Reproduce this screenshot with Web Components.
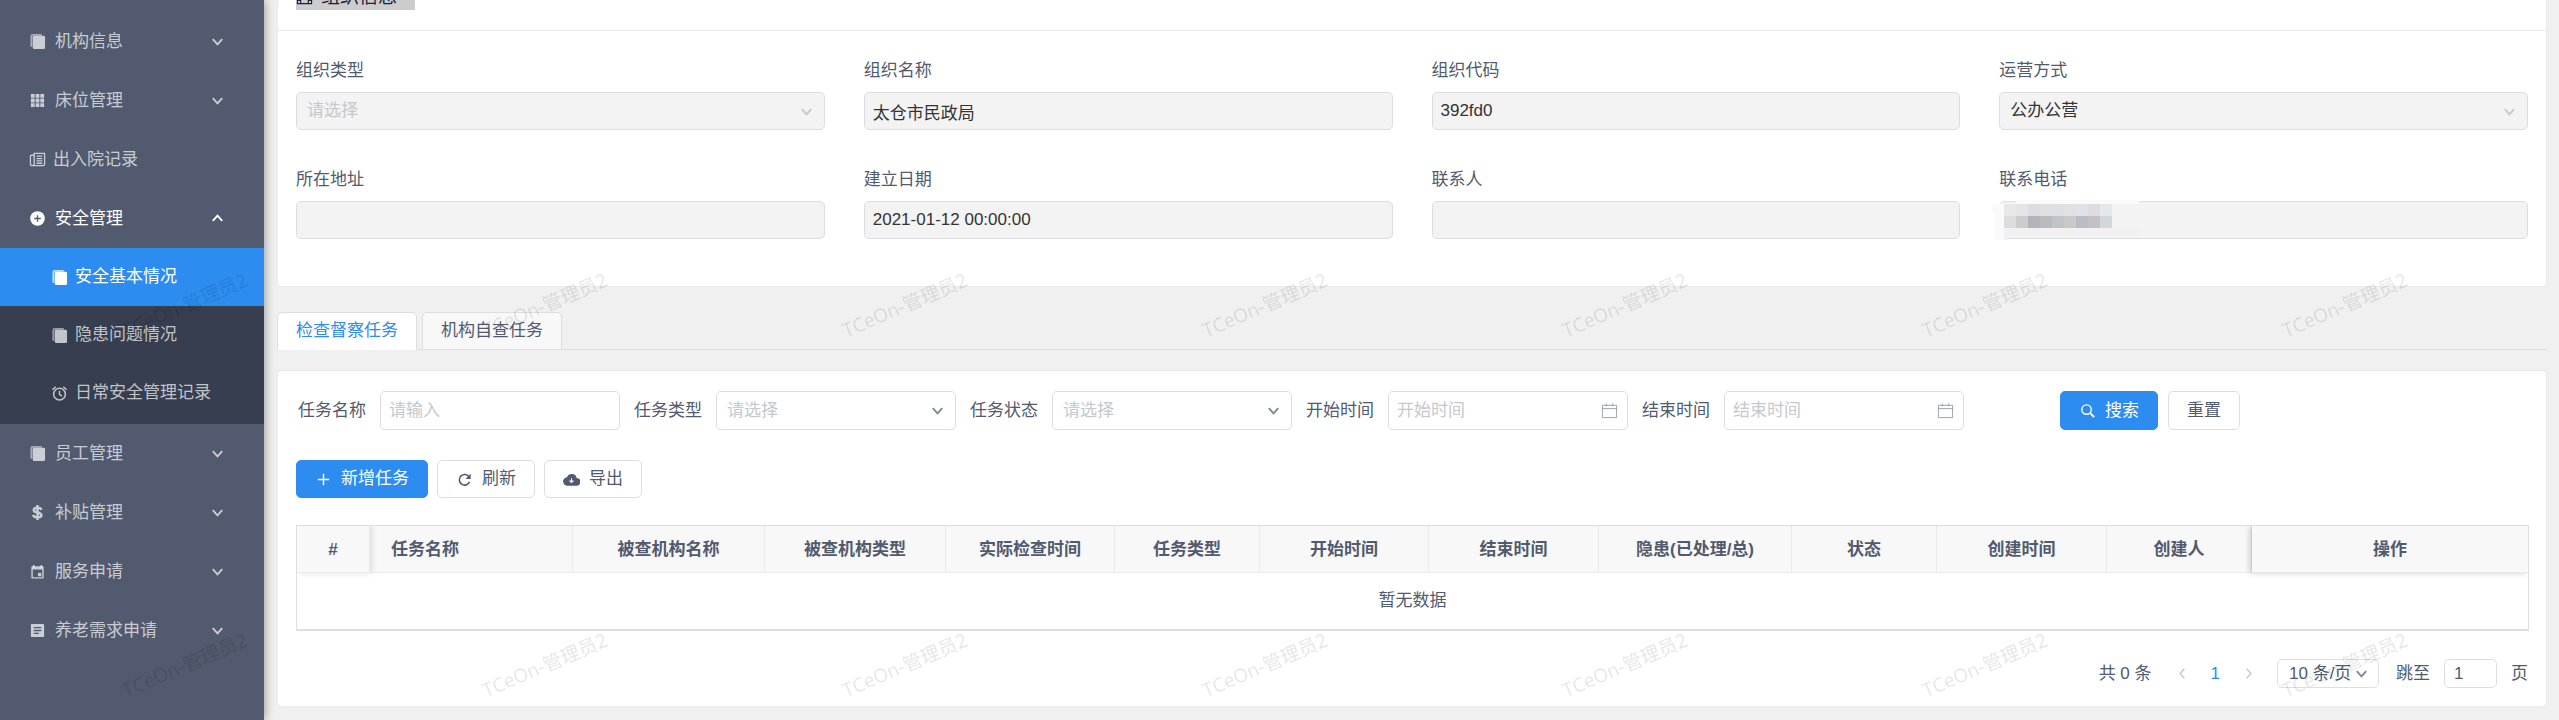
<!DOCTYPE html>
<html lang="zh-CN">
<head>
<meta charset="utf-8">
<title>安全基本情况</title>
<style>
  html {
    height: 100%;
    overflow: hidden;
  }
  body {
    margin: 0;
    min-height: 100%;
    display: flex;
    background: #f0f0f0;
    color: #515a6e;
    font: 17px/20px "Liberation Sans", "Noto Sans CJK SC", sans-serif;
  }
  main {
    flex: 1;
    min-width: 0;
    padding: 0 12px 13px 13px;
  }
  .info {
    display: grid;
    grid-template-columns: repeat(4, 1fr);
    gap: 40px 39px;
    padding: 30px 0 29px;
  }
  .filters {
    display: flex;
    gap: 14px;
    padding-left: 2px;
  }
  .buttons {
    display: flex;
    gap: 10px;
  }
  .filters .buttons {
    margin-left: 82px;
  }
  .actions {
    gap: 9px;
    margin: 30px 0 27px;
  }
</style>
</head>
<body>

<side-nav>
  <nav-group icon="copy" label="机构信息"></nav-group>
  <nav-group icon="apps" label="床位管理"></nav-group>
  <nav-item icon="paper" label="出入院记录"></nav-item>
  <nav-group icon="add" label="安全管理" open>
    <nav-item icon="copy" label="安全基本情况" active></nav-item>
    <nav-item icon="copy" label="隐患问题情况"></nav-item>
    <nav-item icon="alarm" label="日常安全管理记录"></nav-item>
  </nav-group>
  <nav-group icon="copy" label="员工管理"></nav-group>
  <nav-group icon="dollar" label="补贴管理"></nav-group>
  <nav-group icon="calendar" label="服务申请"></nav-group>
  <nav-group icon="list" label="养老需求申请"></nav-group>
</side-nav>

<main>
  <page-card flush>
    <card-title slot="title">组织信息</card-title>
    <div class="info">
      <form-field label="组织类型" type="select" placeholder="请选择" disabled></form-field>
      <form-field label="组织名称" value="太仓市民政局" disabled></form-field>
      <form-field label="组织代码" value="392fd0" disabled></form-field>
      <form-field label="运营方式" type="select" value="公办公营" disabled></form-field>
      <form-field label="所在地址" disabled></form-field>
      <form-field label="建立日期" value="2021-01-12 00:00:00" disabled></form-field>
      <form-field label="联系人" disabled></form-field>
      <form-field label="联系电话" disabled><pixel-mask></pixel-mask></form-field>
    </div>
  </page-card>

  <tab-bar></tab-bar>

  <page-card>
    <div class="filters">
      <form-field inline label="任务名称" placeholder="请输入"></form-field>
      <form-field inline label="任务类型" type="select" placeholder="请选择"></form-field>
      <form-field inline label="任务状态" type="select" placeholder="请选择"></form-field>
      <form-field inline label="开始时间" type="date" placeholder="开始时间"></form-field>
      <form-field inline label="结束时间" type="date" placeholder="结束时间"></form-field>
      <div class="buttons">
        <app-button primary icon="search">搜索</app-button>
        <app-button>重置</app-button>
      </div>
    </div>
    <div class="buttons actions">
      <app-button primary icon="plus">新增任务</app-button>
      <app-button icon="refresh">刷新</app-button>
      <app-button icon="cloud">导出</app-button>
    </div>
    <task-table></task-table>
    <page-pager></page-pager>
  </page-card>
</main>

<water-mark text="TCeOn-管理员2"></water-mark>

<script>
const icons = {
  copy: `<path d="M2.500 14.500V3.500Q2.500 2 4 2H13.500" fill="none" stroke="currentColor" stroke-width="2" opacity=".7"/><rect x="4" y="3" width="13" height="14" rx="1.500" fill="currentColor"/>`,
  apps: `<path d="M2 2h4v4H2zM7 2h4v4H7zM12 2h4v4H12zM2 7h4v4H2zM7 7h4v4H7zM12 7h4v4H12zM2 12h4v4H2zM7 12h4v4H7zM12 12h4v4H12z" fill="currentColor"/>`,
  paper: `<path d="M5 4.500H2.500Q1.500 4.500 1.500 5.500V13.500Q1.500 15.500 3.500 15.500H15Q16.500 15.500 16.500 14V2.500H5.500V13.500Q5.500 15.500 3.500 15.500M8 5.500h6M8 8h6M8 10.500h6M8 13h6" fill="none" stroke="currentColor" stroke-width="1.400"/>`,
  add: `<circle cx="9" cy="9" r="7.700" fill="currentColor"/><path d="M9 5.500v7M5.500 9h7" stroke="#515a6e" stroke-width="1.400"/>`,
  alarm: `<circle cx="9" cy="9.700" r="6.200" fill="none" stroke="currentColor" stroke-width="1.600"/><path d="M9 6v4l2.600 1.800M1.500 5 5 2M16.500 5 13 2" fill="none" stroke="currentColor" stroke-width="1.500"/>`,
  dollar: `<path d="M13.200 6.200Q12.500 4 9 4T5 6.300Q5 8.300 9 9t4.200 3Q13.200 14.200 9 14.200T4.500 11.600M9 1v16" fill="none" stroke="currentColor" stroke-width="2.600"/>`,
  calendar: `<path d="M5 2v3M13 2v3" stroke="currentColor" stroke-width="1.600"/><path fill-rule="evenodd" d="M3.500 3.500h11q1 0 1 1v11q0 1-1 1h-11q-1 0-1-1v-11q0-1 1-1zM4 7v8h10V7z" fill="currentColor"/><path d="M9.500 10.500h3.500V14H9.500z" fill="currentColor"/>`,
  list: `<path fill-rule="evenodd" d="M3 2h12q1 0 1 1v12q0 1-1 1H3q-1 0-1-1V3q0-1 1-1zM5 5.300v1.400h8V5.300zM5 8.300v1.400h8V8.300zM5 11.300v1.400h5.500v-1.400z" fill="currentColor"/>`,
  down: `<path d="M4 6.500 9 12l5-5.500" fill="none" stroke="currentColor" stroke-width="2"/>`,
  up: `<path d="M4 11.500 9 6l5 5.500" fill="none" stroke="currentColor" stroke-width="2"/>`,
  left: `<path d="M11 4 6.500 9l4.500 5" fill="none" stroke="currentColor" stroke-width="1.500"/>`,
  right: `<path d="M7 4l4.500 5L7 14" fill="none" stroke="currentColor" stroke-width="1.500"/>`,
  date: `<path d="M1.500 3.500h15v13h-15zM1.500 7h15M5.500 1.500v3M12.500 1.500v3" fill="none" stroke="currentColor" opacity=".8"/>`,
  search: `<circle cx="8" cy="8" r="5" fill="none" stroke="currentColor" stroke-width="1.500"/><path d="M11.600 11.600 16 16" stroke="currentColor" stroke-width="2"/>`,
  plus: `<path d="M9 3v12M3 9h12" stroke="currentColor" stroke-width="1.500"/>`,
  refresh: `<path d="M14 6.500A5.600 5.600 0 1 0 14.300 11.500" fill="none" stroke="currentColor" stroke-width="1.700"/><path d="M15.500 3v5.500H10z" fill="currentColor"/>`,
  cloud: `<path d="M14.500 7.300A5.500 5.500 0 0 0 4.200 6.500 4.500 4.500 0 0 0 5 15.500h9A4.100 4.100 0 0 0 14.500 7.300z" fill="currentColor"/><path d="M9 7.500v4M7 10.500h4L9 12.500z" fill="#fff" stroke="#fff"/>`,
  film: `<path d="M1.500 2.500h15v13h-15zM5 2.500v13M13 2.500v13M5 9h8M1.500 6H5M1.500 9H5M1.500 12H5M13 6h3.500M13 9h3.500M13 12h3.500" fill="none" stroke="currentColor" stroke-width="1.200"/>`
};

function icon(name) {
  return `<svg class="icon" viewBox="0 0 18 18" aria-hidden="true">${icons[name]}</svg>`;
}

// shared base: every element renders its own markup into an open root
class BaseElement extends HTMLElement {
  constructor() {
    super();
    this.attachShadow({ mode: "open" });
  }
  connectedCallback() {
    const template = document.createElement("template");
    template.innerHTML = `
      <style>
        *, :host { box-sizing: border-box; }
        .icon { width: 17px; height: 17px; flex: none; display: block; }
      </style>
      ${this.render()}`;
    this.shadowRoot.replaceChildren(template.content.cloneNode(true));
  }
  attr(name) {
    return this.getAttribute(name) || "";
  }
}

class SideNav extends BaseElement {
  render() {
    return `
      <style>
        :host {
          display: block;
          flex: none;
          width: 264px;
          padding-top: 12px;
          background: #515a6e;
          box-shadow: 2px 0 8px rgba(29, 35, 41, .35);
          z-index: 1;
        }
      </style>
      <nav><slot></slot></nav>`;
  }
}

class NavGroup extends BaseElement {
  render() {
    const open = this.hasAttribute("open");
    return `
      <style>
        :host { display: block; color: rgba(255, 255, 255, .7); }
        :host([open]) { color: #fff; }
        button {
          display: flex;
          align-items: center;
          gap: 9px;
          width: 100%;
          height: 59px;
          padding: 0 38px 0 29px;
          border: 0;
          background: none;
          color: inherit;
          font: inherit;
          text-align: left;
        }
        span { flex: 1; }
        .sub { background: #363e4f; }
        :host([open]) .sub { padding-bottom: 2px; }
        ::slotted(nav-item) { --item-height: 58px; --item-indent: 51px; }
      </style>
      <button type="button" aria-expanded="${open}">
        ${icon(this.attr("icon"))}<span>${this.attr("label")}</span>${icon(open ? "up" : "down")}
      </button>
      <div class="sub"><slot></slot></div>`;
  }
}

class NavItem extends BaseElement {
  render() {
    return `
      <style>
        :host { display: block; }
        a {
          display: flex;
          align-items: center;
          gap: 7px;
          height: var(--item-height, 59px);
          padding-left: var(--item-indent, 29px);
          color: rgba(255, 255, 255, .7);
          text-decoration: none;
        }
        :host([active]) a { background: #2d8cf0; color: #fff; }
      </style>
      <a href="#">${icon(this.attr("icon"))}<span>${this.attr("label")}</span></a>`;
  }
}

class PageCard extends BaseElement {
  render() {
    return `
      <style>
        :host {
          display: block;
          padding: 20px 18px 18px;
          border: 1px solid #e8eaec;
          border-radius: 5px;
          background: #fff;
        }
        /* first card runs out of the top of the scrolled view */
        :host([flush]) {
          padding: 0 18px 18px;
          border-top: 0;
          border-radius: 0 0 5px 5px;
        }
        header { display: none; }
        :host([flush]) header {
          display: flex;
          align-items: flex-end;
          height: 31px;
          margin: 0 -18px;
          padding: 0 18px 20px;
          border-bottom: 1px solid #e8eaec;
          overflow: hidden;
        }
      </style>
      <header><slot name="title"></slot></header>
      <slot></slot>`;
  }
}

class CardTitle extends BaseElement {
  render() {
    return `
      <style>
        :host {
          display: flex;
          align-items: center;
          gap: 8px;
          padding-right: 18px;
          background: #ccc;
          color: #17233d;
          font-size: 19px;
          line-height: 26px;
        }
      </style>
      ${icon("film")}<slot></slot>`;
  }
}

class FormField extends BaseElement {
  render() {
    const type = this.getAttribute("type");
    const disabled = this.hasAttribute("disabled") ? "disabled" : "";
    const value = this.attr("value");
    const hint = this.attr("placeholder");
    const control = type === "select"
      ? `<select id="control" class="${value ? "" : "empty"}" ${disabled}><option>${value || hint}</option></select>${icon("down")}`
      : `<input id="control" type="text" value="${value}" placeholder="${hint}" ${disabled}>${type === "date" ? icon("date") : ""}`;
    return `
      <style>
        :host { display: grid; gap: 11px; min-width: 0; }
        :host([inline]) {
          display: flex;
          align-items: center;
          gap: 14px;
        }
        label { white-space: nowrap; }
        .box { display: grid; align-items: center; position: relative; }
        :host([inline]) .box { width: 240px; }
        input, select, .icon { grid-area: 1 / 1; }
        input, select {
          appearance: none;
          width: 100%;
          height: 38px;
          margin: 0;
          padding: 0 8px;
          border: 1px solid #dcdee2;
          border-radius: 5px;
          background: #fff;
          color: #515a6e;
          font: inherit;
          opacity: 1;
        }
        input { line-height: 26px; }
        :host([inline]) input, :host([inline]) select { height: 39px; }
        select { padding: 0 10px; }
        select.empty, ::placeholder { color: #c5c8ce; opacity: 1; }
        :disabled { background: #f3f3f3; color: #333; }
        .box .icon {
          justify-self: end;
          margin-right: 10px;
          color: #808695;
          pointer-events: none;
        }
        :disabled ~ .icon { color: #c5c8ce; }
      </style>
      <label for="control">${this.attr("label")}</label>
      <div class="box">${control}<slot></slot></div>`;
  }
}

// blocks covering the phone number
class PixelMask extends BaseElement {
  render() {
    const rows = [
      ["#e8e8e9", "#e5e5e5", "#dcdde0", "#e0e0e1", "#dddfe3", "#e0e1e1", "#dfe2e6", "#dddde0", "#e6e7ea"],
      ["#dcdcde", "#cccccd", "#b3b4bb", "#bdbabd", "#c1c3cb", "#c9c8cb", "#bbbdc6", "#c3c1c5", "#d3d7dd"]
    ];
    const cells = rows.map((row, y) => row.map((fill, x) =>
      `<rect x="${12 + x * 12}" y="${4 + y * 12}" width="12" height="12" fill="${fill}"/>`).join("")).join("");
    return `
      <style>
        :host { position: absolute; left: -7px; top: -1px; }
        svg { display: block; }
      </style>
      <svg width="148" height="40" aria-hidden="true">
        <path d="M3 4H24V0H147V4H12V40H3V15Q0 13 0 9T3 4z" fill="#fafafa"/>
        <path d="M12 28H147V36H16V40H12z" fill="#f1f1f2"/>
        ${cells}
      </svg>`;
  }
}

class TabBar extends BaseElement {
  render() {
    return `
      <style>
        :host {
          display: flex;
          gap: 5px;
          height: 38px;
          margin: 25px 0 20px;
          box-shadow: inset 0 -1px #dcdee2;
        }
        button {
          padding: 0 18px;
          border: 1px solid #dcdee2;
          border-radius: 5px 5px 0 0;
          background: #f8f8f9;
          color: inherit;
          font: inherit;
        }
        button[aria-selected="true"] {
          border-bottom-color: #fff;
          background: #fff;
          color: #2d8cf0;
        }
      </style>
      <button type="button" role="tab" aria-selected="true">检查督察任务</button>
      <button type="button" role="tab" aria-selected="false">机构自查任务</button>`;
  }
}

class AppButton extends BaseElement {
  render() {
    return `
      <style>
        :host { display: block; }
        button {
          display: flex;
          align-items: center;
          gap: 9px;
          height: 100%;
          min-height: 38px;
          padding: 0 18px;
          border: 1px solid #dcdee2;
          border-radius: 5px;
          background: #fff;
          color: #515a6e;
          font: inherit;
          white-space: nowrap;
        }
        :host([primary]) button {
          border-color: #2d8cf0;
          background: #2d8cf0;
          color: #fff;
        }
      </style>
      <button type="button">${this.attr("icon") ? icon(this.attr("icon")) : ""}<slot></slot></button>`;
  }
}

class TaskTable extends BaseElement {
  render() {
    const columns = [
      ["#", 73], ["任务名称", 203], ["被查机构名称", 192], ["被查机构类型", 181],
      ["实际检查时间", 169], ["任务类型", 145], ["开始时间", 169], ["结束时间", 170],
      ["隐患(已处理/总)", 193], ["状态", 145], ["创建时间", 170], ["创建人", 145], ["操作", 276]
    ];
    return `
      <style>
        :host { display: block; }
        table {
          width: 100%;
          table-layout: fixed;
          border: 1px solid #dcdee2;
          border-bottom-width: 2px;
          border-spacing: 0;
        }
        th {
          height: 47px;
          padding: 2px 0 0;
          border-right: 1px solid #e8eaec;
          border-bottom: 1px solid #e8eaec;
          background: #f8f8f9;
        }
        th:nth-child(2) { padding-left: 21px; text-align: left; }
        th:first-child { position: relative; box-shadow: 2px 0 6px rgba(0, 0, 0, .12); clip-path: inset(0 -10px -10px 0); }
        th:last-child { position: relative; border-right: 0; box-shadow: -2px 0 6px rgba(0, 0, 0, .2); clip-path: inset(0 0 -10px -10px); }
        td { height: 56px; padding: 0; text-align: center; }
      </style>
      <table>
        <colgroup>${columns.map(c => `<col style="width: ${c[1]}px">`).join("")}</colgroup>
        <thead><tr>${columns.map(c => `<th scope="col">${c[0]}</th>`).join("")}</tr></thead>
        <tbody><tr><td colspan="${columns.length}">暂无数据</td></tr></tbody>
      </table>`;
  }
}

class PagePager extends BaseElement {
  render() {
    return `
      <style>
        :host {
          display: flex;
          align-items: center;
          justify-content: flex-end;
          height: 29px;
          margin-top: 28px;
        }
        .total { margin-right: 22px; }
        .pages { display: flex; align-items: center; gap: 20px; margin-right: 20px; }
        .pages button { padding: 0; border: 0; background: none; color: #c5c8ce; }
        a { color: #2d8cf0; text-decoration: none; }
        .size { display: grid; align-items: center; margin-right: 17px; }
        select, input {
          appearance: none;
          height: 29px;
          margin: 0;
          padding: 0 11px;
          border: 1px solid #dcdee2;
          border-radius: 5px;
          background: #fff;
          color: inherit;
          font: inherit;
        }
        select { width: 102px; }
        select, .size .icon { grid-area: 1 / 1; }
        .size .icon { justify-self: end; margin-right: 9px; color: #808695; pointer-events: none; }
        label { display: flex; align-items: center; gap: 14px; }
        input { width: 53px; padding: 0 9px; }
      </style>
      <span class="total">共 0 条</span>
      <div class="pages">
        <button type="button" aria-label="上一页" disabled>${icon("left")}</button>
        <a href="#">1</a>
        <button type="button" aria-label="下一页" disabled>${icon("right")}</button>
      </div>
      <div class="size"><select aria-label="每页条数"><option>10 条/页</option></select>${icon("down")}</div>
      <label>跳至<input type="text" value="1">页</label>`;
  }
}

class WaterMark extends BaseElement {
  render() {
    return `
      <style>
        :host {
          position: fixed;
          inset: 0;
          z-index: 2;
          display: grid;
          grid-template-columns: repeat(7, 360px);
          grid-auto-rows: 360px;
          overflow: hidden;
          pointer-events: none;
          color: rgba(0, 0, 0, .1);
          font: 19px/20px "Open Sans", "Noto Sans CJK SC", sans-serif;
        }
        span {
          place-self: end center;
          padding: 0 0 45px 10px;
        }
        b { display: block; font-weight: normal; transform: rotate(-23deg); }
      </style>
      ${`<span aria-hidden="true"><b>${this.attr("text")}</b></span>`.repeat(14)}`;
  }
}

customElements.define("side-nav", SideNav);
customElements.define("nav-group", NavGroup);
customElements.define("nav-item", NavItem);
customElements.define("page-card", PageCard);
customElements.define("card-title", CardTitle);
customElements.define("form-field", FormField);
customElements.define("pixel-mask", PixelMask);
customElements.define("tab-bar", TabBar);
customElements.define("app-button", AppButton);
customElements.define("task-table", TaskTable);
customElements.define("page-pager", PagePager);
customElements.define("water-mark", WaterMark);
</script>
</body>
</html>
